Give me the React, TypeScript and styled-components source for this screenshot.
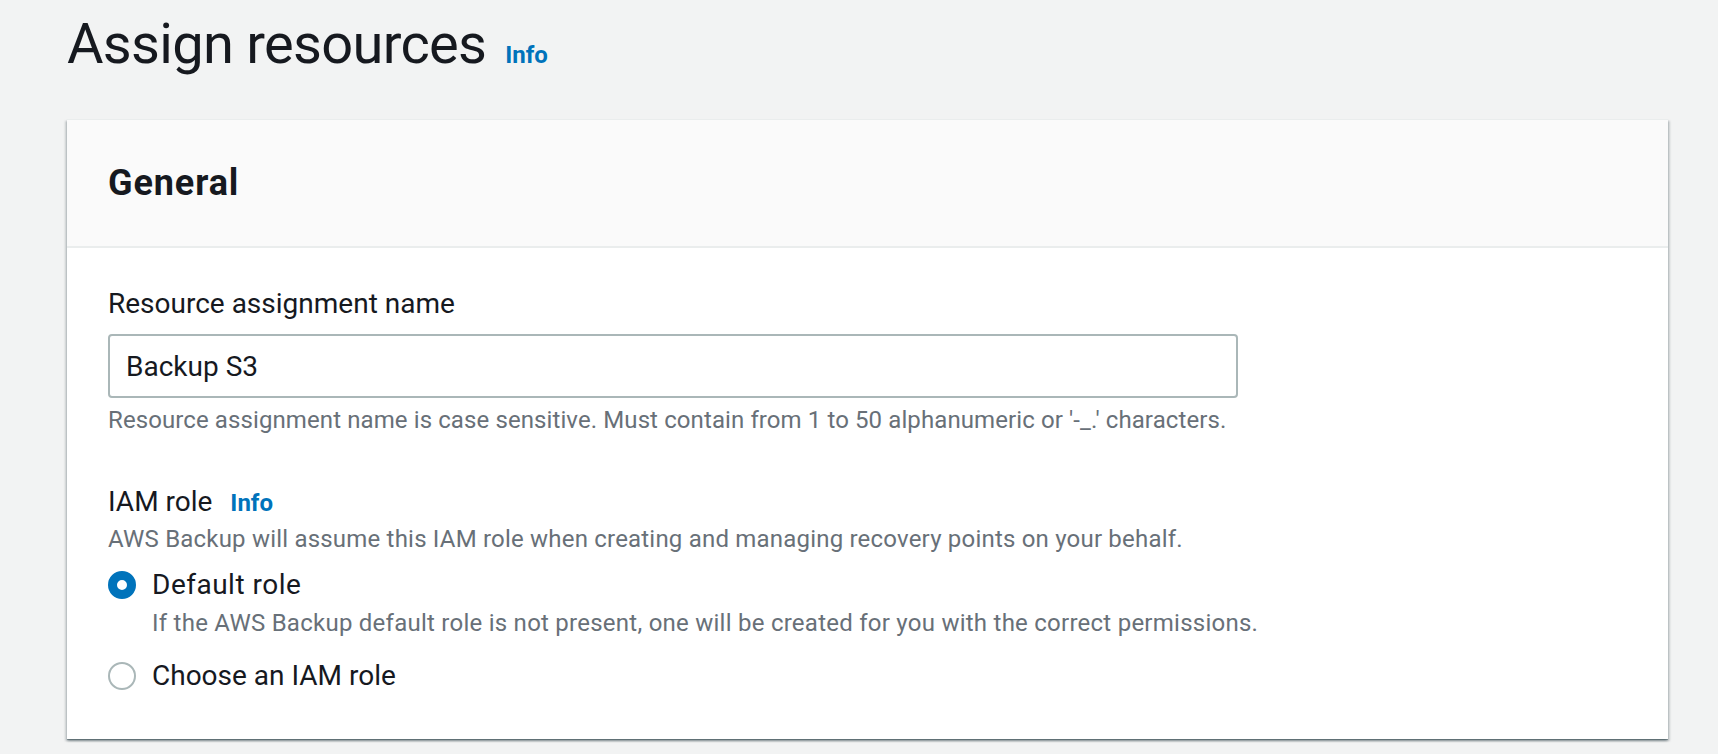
import React from "react";
import styled, { createGlobalStyle } from "styled-components";

const GlobalStyle = createGlobalStyle`
  html, body {
    margin: 0;
    padding: 0;
    background: #f2f3f3;
    font-family: Roboto, "Liberation Sans", Arial, sans-serif;
    color: #16191f;
  }
  * { box-sizing: border-box; }
`;

const Page = styled.div`
  padding: 8px 50px 16px 67px;
`;

const TitleRow = styled.div`
  display: flex;
  align-items: baseline;
  gap: 19px;
  margin-bottom: 39px;
`;

const Title = styled.h1`
  margin: 0;
  font-size: 56px;
  line-height: 72px;
  font-weight: 400;
  letter-spacing: -0.7px;
  color: #16191f;
`;

const InfoLink = styled.a`
  font-size: 24px;
  font-weight: 700;
  color: #0073bb;
  text-decoration: none;
  cursor: pointer;
`;

const Card = styled.section`
  background: #ffffff;
  border-top: 1px solid #eaeded;
  box-shadow: 0 1px 0 0 rgba(0, 28, 36, 0.25), 0 2px 2px 0 rgba(0, 28, 36, 0.3),
    2px 2px 2px 0 rgba(0, 28, 36, 0.15), -2px 2px 2px 0 rgba(0, 28, 36, 0.15);
`;

const CardHeader = styled.div`
  background: #fafafa;
  padding: 41px 40px 41px 41px;
  border-bottom: 2px solid #eaeded;
`;

const CardTitle = styled.h2`
  margin: 0;
  font-size: 36px;
  line-height: 44px;
  font-weight: 700;
  letter-spacing: 0.9px;
  color: #16191f;
`;

const CardBody = styled.div`
  padding: 36px 40px 43px 41px;
`;

const Field = styled.div<{ $top?: number }>`
  display: flex;
  flex-direction: column;
  margin-top: ${(p) => p.$top ?? 0}px;
`;

const LabelRow = styled.div`
  display: flex;
  align-items: baseline;
  gap: 18px;
`;

const Label = styled.label`
  font-size: 28px;
  line-height: 40px;
  color: #16191f;
`;

const TextInput = styled.input`
  width: 1130px;
  height: 64px;
  margin-top: 10px;
  padding: 0 16px;
  border: 2px solid #aab7b8;
  border-radius: 4px;
  background: #fff;
  font-family: inherit;
  font-size: 28px;
  line-height: 40px;
  color: #16191f;
  outline: none;
`;

const Hint = styled.div<{ $top?: number; $spacing?: number }>`
  font-size: 24px;
  line-height: 32px;
  letter-spacing: ${(p) => p.$spacing ?? 0.2}px;
  color: #687078;
  margin-top: ${(p) => p.$top ?? 0}px;
`;

const RadioGroup = styled.div`
  display: flex;
  flex-direction: column;
  gap: 17px;
  margin-top: 10px;
`;

const RadioItem = styled.label`
  display: grid;
  grid-template-columns: 28px 1fr;
  column-gap: 16px;
  align-items: center;
  cursor: pointer;
`;

const RadioCircle = styled.span<{ $checked?: boolean }>`
  width: 28px;
  height: 28px;
  border-radius: 50%;
  background: #fff;
  border: ${(p) => (p.$checked ? "9px solid #0073bb" : "2px solid #aab7b8")};
`;

const RadioLabel = styled.span<{ $spacing?: number }>`
  font-size: 28px;
  line-height: 40px;
  letter-spacing: ${(p) => p.$spacing ?? 0}px;
  color: #16191f;
`;

const RadioDesc = styled.span`
  grid-column: 2;
  font-size: 24px;
  line-height: 32px;
  letter-spacing: 0.25px;
  color: #687078;
  margin-top: 2px;
`;

export default function App() {
  return (
    <>
      <GlobalStyle />
      <Page>
        <TitleRow>
          <Title>Assign resources</Title>
          <InfoLink>Info</InfoLink>
        </TitleRow>
        <Card>
          <CardHeader>
            <CardTitle>General</CardTitle>
          </CardHeader>
          <CardBody>
            <Field>
              <Label>Resource assignment name</Label>
              <TextInput defaultValue="Backup S3" />
              <Hint $top={6} $spacing={0.1}>
                Resource assignment name is case sensitive. Must contain from 1 to 50 alphanumeric or '-_.'
                characters.
              </Hint>
            </Field>
            <Field $top={46}>
              <LabelRow>
                <Label>IAM role</Label>
                <InfoLink>Info</InfoLink>
              </LabelRow>
              <Hint $top={1}>AWS Backup will assume this IAM role when creating and managing recovery points on your behalf.</Hint>
              <RadioGroup>
                <RadioItem>
                  <RadioCircle $checked />
                  <RadioLabel $spacing={0.5}>Default role</RadioLabel>
                  <RadioDesc>
                    If the AWS Backup default role is not present, one will be created for you with the correct permissions.
                  </RadioDesc>
                </RadioItem>
                <RadioItem>
                  <RadioCircle />
                  <RadioLabel>Choose an IAM role</RadioLabel>
                </RadioItem>
              </RadioGroup>
            </Field>
          </CardBody>
        </Card>
      </Page>
    </>
  );
}
